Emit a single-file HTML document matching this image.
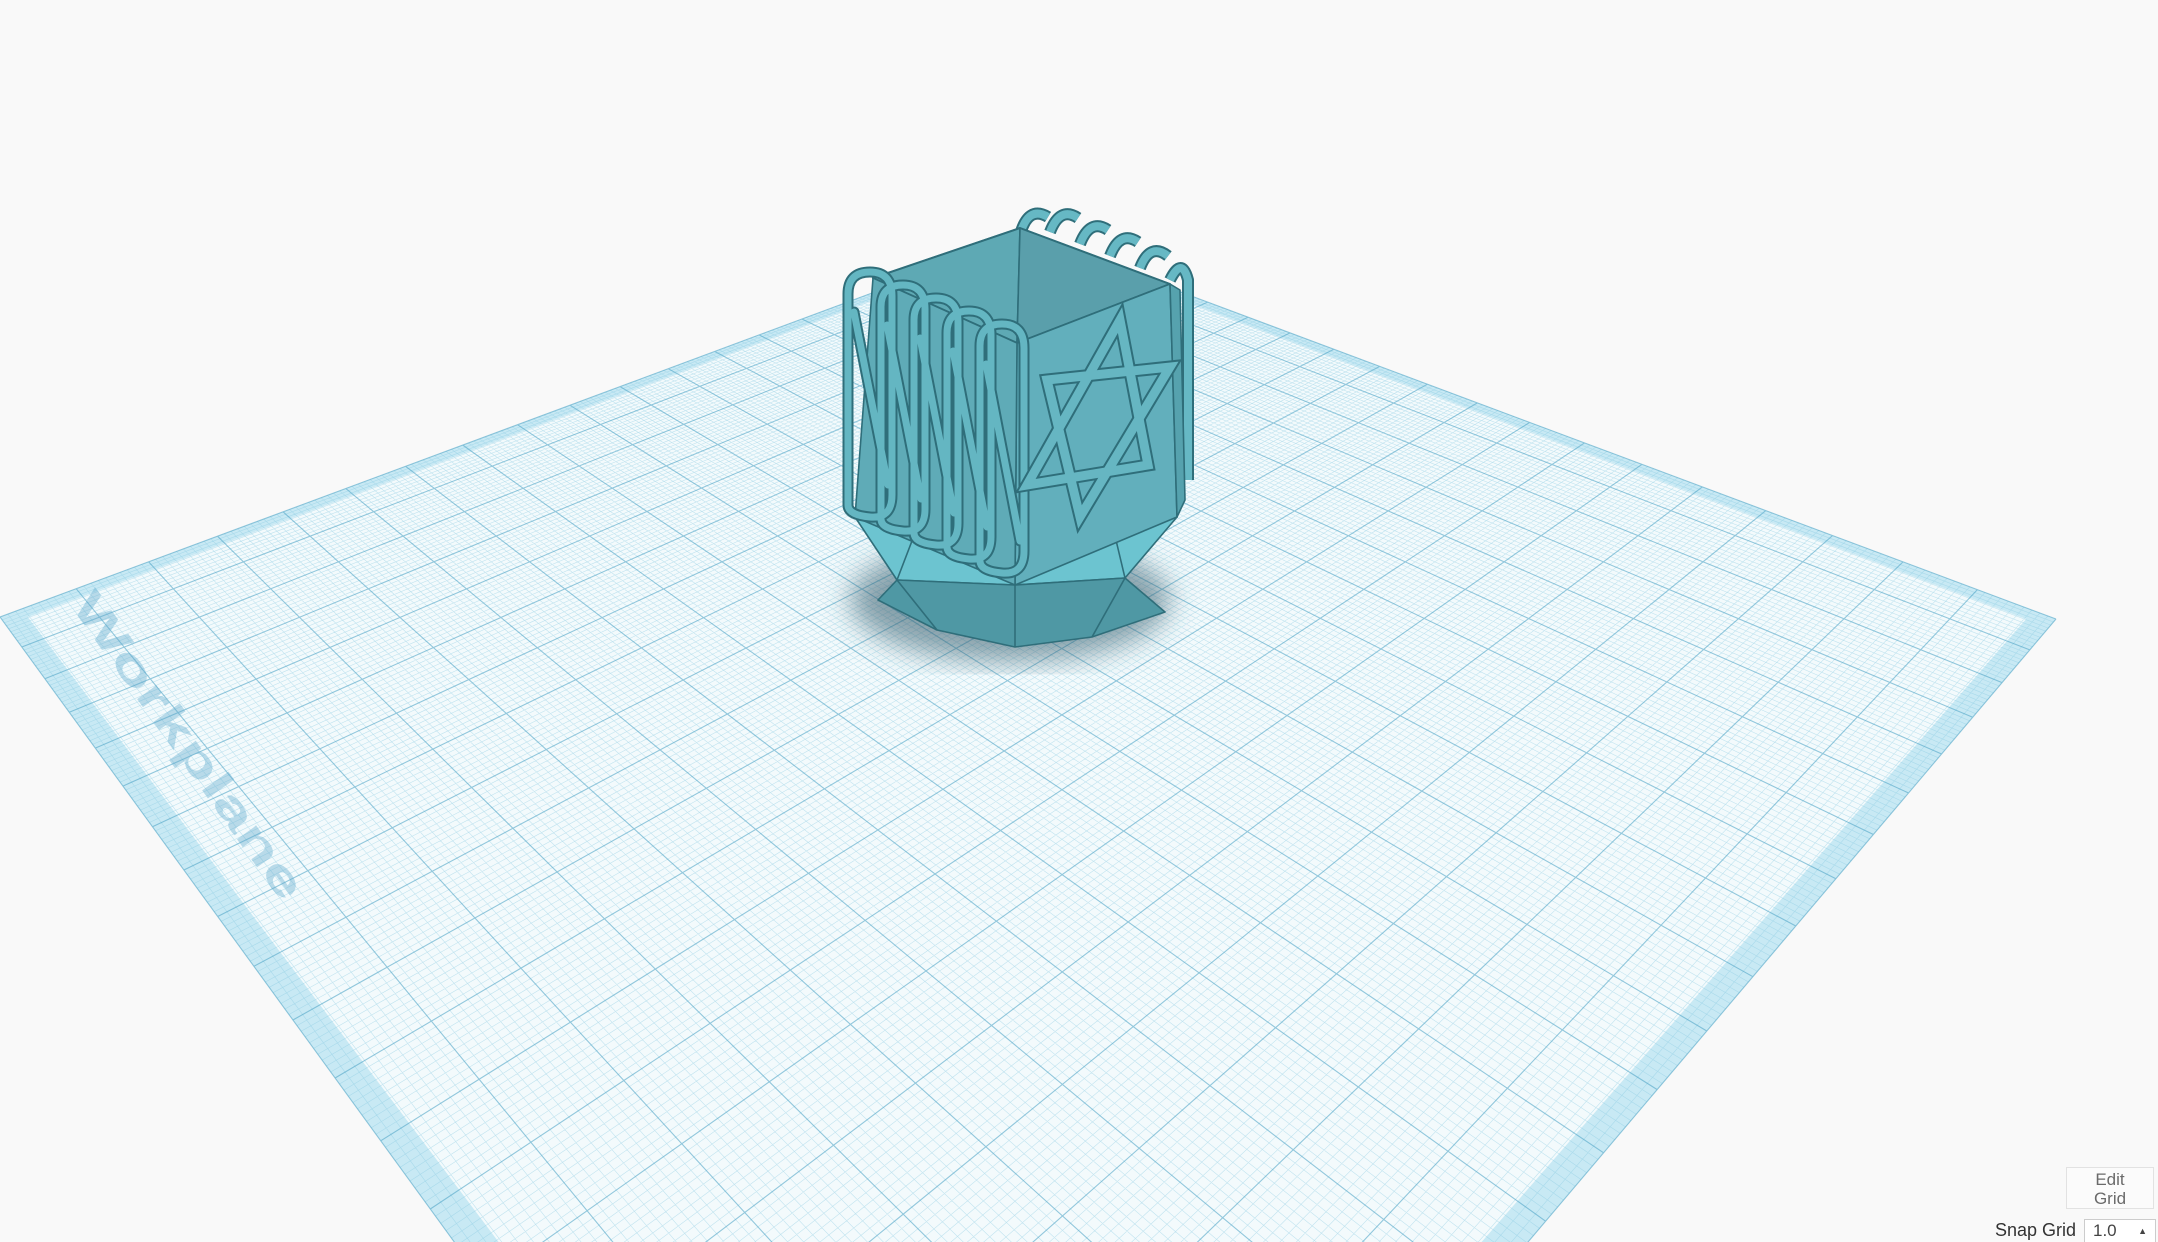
<!DOCTYPE html>
<html><head><meta charset="utf-8"><style>
html,body{margin:0;padding:0;background:#f9f9f9;overflow:hidden;width:2158px;height:1242px}
svg{display:block}
.ui{position:absolute;font-family:"Liberation Sans",sans-serif}
</style></head><body>
<svg id="s" width="2158" height="1242" viewBox="0 0 2158 1242" xmlns="http://www.w3.org/2000/svg" style="position:absolute;left:0;top:0">
<rect width="2158" height="1242" fill="#f9f9f9"/>
<g id="plane"></g>
<text transform="translate(70,605) rotate(54.5) scale(1,0.62)" font-family="Liberation Sans,sans-serif" font-weight="bold" font-size="72" fill="rgba(95,170,205,0.4)">Workplane</text>
<defs><filter id="bl"><feGaussianBlur stdDeviation="14"/></filter></defs>
<ellipse cx="1010" cy="600" rx="160" ry="62" fill="rgba(50,90,105,0.55)" filter="url(#bl)"/>
<g stroke="#2f6e7a" stroke-width="1.6" stroke-linejoin="round">
<polygon points="855,517 897,580 1015,585 1125,578 1177,517 1100,505 900,505" fill="#6cc4d0"/>
<polygon points="897,580 1015,585 1125,578 1165,612 1092,637 1015,647 937,630 878,600" fill="#4f98a4"/>
<line x1="1015" y1="585" x2="1015" y2="647"/>
<line x1="897" y1="580" x2="937" y2="630"/>
<line x1="1125" y1="578" x2="1092" y2="637"/>
<line x1="1017" y1="520" x2="1015" y2="585"/>
<line x1="920" y1="520" x2="897" y2="580"/>
<line x1="1110" y1="515" x2="1125" y2="578"/>
<g fill="none" stroke-width="12" stroke="#2f6e7a">
<path d="M1020,235 q8,-30 28,-18 M1050,232 q10,-26 28,-14 M1080,244 q10,-26 28,-14 M1110,256 q10,-26 28,-14 M1140,268 q10,-26 28,-12 M1170,280 q12,-24 18,0 L1188,480"/>
</g>
<g fill="none" stroke-width="8" stroke="#66b8c4">
<path d="M1020,235 q8,-30 28,-18 M1050,232 q10,-26 28,-14 M1080,244 q10,-26 28,-14 M1110,256 q10,-26 28,-14 M1140,268 q10,-26 28,-12 M1170,280 q12,-24 18,0 L1188,480"/>
</g>
<polygon points="873,278 1020,228 1017,343" fill="#5ea9b4"/>
<polygon points="1020,228 1170,284 1017,343" fill="#5a9fab"/>
<polygon points="873,278 1020,228 1170,284 1017,343" fill="none" stroke-width="2"/>
<polygon points="1017,343 1170,284 1177,517 1015,585" fill="#62afbc"/>
<polygon points="1170,284 1180,290 1185,500 1177,517" fill="#56a2ae"/>
<polygon points="873,278 1017,343 1015,585 855,517" fill="#5fabb7"/>
</g>
<g id="fr" fill="none" stroke-linecap="round"></g>
<g fill="none" stroke-linejoin="miter">
<polygon points="1120,320 1027,485 1148,465" stroke="#2f6e7a" stroke-width="13"/>
<polygon points="1047,380 1170,367 1080,517" stroke="#2f6e7a" stroke-width="13"/>
<polygon points="1120,320 1027,485 1148,465" stroke="#66b6c2" stroke-width="9"/>
<polygon points="1047,380 1170,367 1080,517" stroke="#66b6c2" stroke-width="9"/>
</g>
</svg>
<div class="ui" style="left:2066px;top:1167px;width:88px;height:42px;border:1px solid #e2e2e2;background:#fbfbfb;color:#6a6a6a;font-size:17px;line-height:19px;text-align:center;padding-top:2px;box-sizing:border-box">Edit<br>Grid</div>
<div class="ui" style="left:1995px;top:1219px;color:#333;font-size:18px;line-height:22px">Snap Grid</div>
<div class="ui" style="left:2084px;top:1219px;width:72px;height:23px;border:1px solid #ccc;border-bottom:none;background:#fff;color:#444;font-size:17px;padding-left:8px;box-sizing:border-box;line-height:22px;overflow:hidden">1.0<span style="position:absolute;right:8px;top:0;font-size:9px">▲</span></div>
<script>
(function(){
var P0=[1028,235],P1=[2056,619],P2=[950,1924],P3=[0,617];
var x0=P0[0],y0=P0[1],x1=P1[0],y1=P1[1],x2=P2[0],y2=P2[1],x3=P3[0],y3=P3[1];
var dx1=x1-x2,dx2=x3-x2,dx3=x0-x1+x2-x3,dy1=y1-y2,dy2=y3-y2,dy3=y0-y1+y2-y3;
var den=dx1*dy2-dx2*dy1;
var g=(dx3*dy2-dx2*dy3)/den,h=(dx1*dy3-dx3*dy1)/den;
var a=x1-x0+g*x1,b=x3-x0+h*x3,c=x0,d=y1-y0+g*y1,e=y3-y0+h*y3,f=y0;
function M(u,v){var w=g*u+h*v+1;return [(a*u+b*v+c)/w,(d*u+e*v+f)/w];}
function pt(p){return p[0].toFixed(1)+','+p[1].toFixed(1);}
var s='';
s+='<polygon points="'+pt(M(0,0))+' '+pt(M(1,0))+' '+pt(M(1,1))+' '+pt(M(0,1))+'" fill="#f3fafc"/>';
var t=0.014;
s+='<path fill-rule="evenodd" fill="rgba(120,200,228,0.35)" d="M'+pt(M(0,0))+'L'+pt(M(1,0))+'L'+pt(M(1,1))+'L'+pt(M(0,1))+'Z M'+pt(M(t,t))+'L'+pt(M(1-t,t))+'L'+pt(M(1-t,1-t))+'L'+pt(M(t,1-t))+'Z"/>';
var minor='',major='';
for(var i=0;i<=200;i++){var q=i/200;
 var l1='M'+pt(M(q,0))+'L'+pt(M(q,1));
 var l2='M'+pt(M(0,q))+'L'+pt(M(1,q));
 if(i%10==0) major+=l1+l2; else minor+=l1+l2;}
s+='<path d="'+minor+'" stroke="rgba(130,200,225,0.45)" stroke-width="0.6" fill="none"/>';
s+='<path d="'+major+'" stroke="rgba(80,165,198,0.6)" stroke-width="1.1" fill="none"/>';
document.getElementById('plane').innerHTML=s;
var fr='',dark='';
for(var k=0;k<5;k++){
 var X=848+k*33,T=272+k*13,B=505+k*14,W=44;
 var p='M'+X+','+(B)+' L'+X+','+(T+22)+' Q'+X+','+T+' '+(X+W/2)+','+T+' Q'+(X+W)+','+T+' '+(X+W)+','+(T+24)+' L'+(X+W)+','+(B-10)+' Q'+(X+W)+','+(B+14)+' '+(X+W/2)+','+(B+12)+' Q'+X+','+(B+10)+' '+X+','+B;
 dark+=p;
 dark+='M'+(X+6)+','+(T+40)+' L'+(X+W-4)+','+(B-20);
}
fr+='<path d="'+dark+'" stroke="#2f6e7a" stroke-width="11"/>';
fr+='<path d="'+dark+'" stroke="#64b6c2" stroke-width="7"/>';
document.getElementById('fr').innerHTML=fr;
})();
</script>
</body></html>
